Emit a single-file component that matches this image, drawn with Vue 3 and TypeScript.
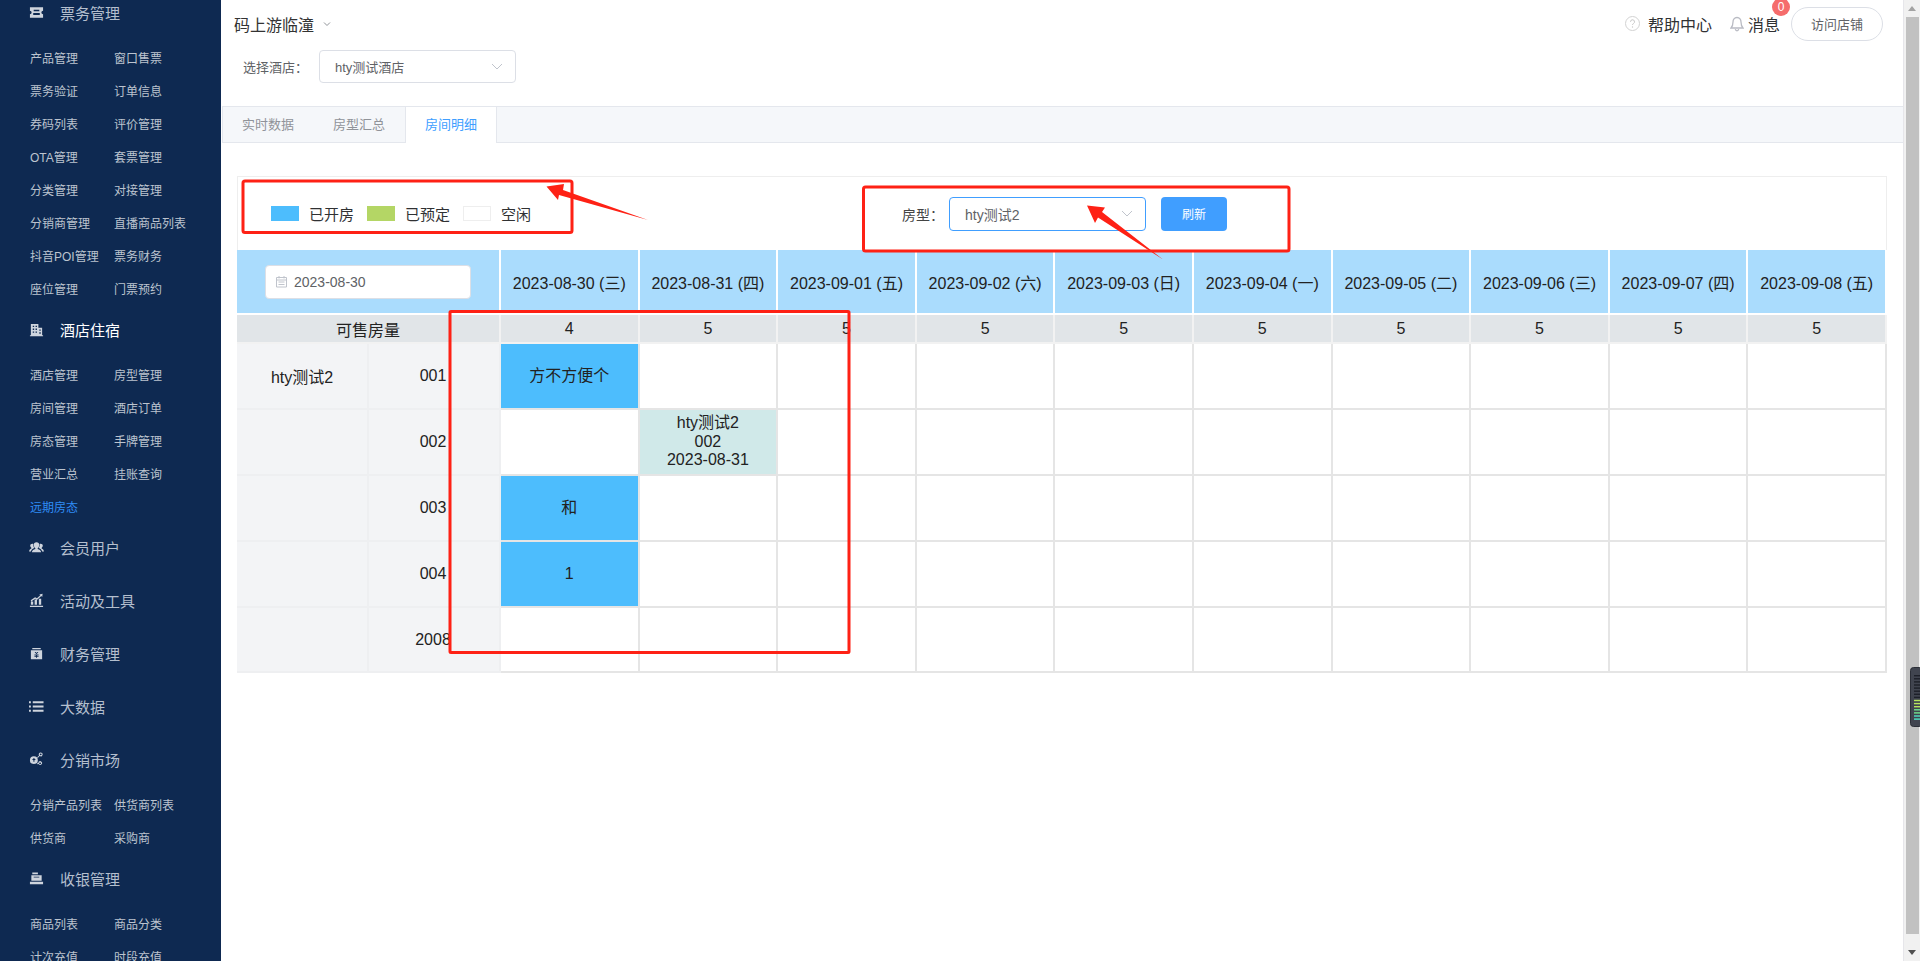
<script setup lang="ts">
interface Group { title: string; icon: string; active?: boolean; items: { label: string; current?: boolean }[] }
const mk = (...l: string[]) => l.map((label) => ({ label }))
const groups: Group[] = [
  { title: '票务管理', icon: 'ticket', items: mk('产品管理','窗口售票','票务验证','订单信息','券码列表','评价管理','OTA管理','套票管理','分类管理','对接管理','分销商管理','直播商品列表','抖音POI管理','票务财务','座位管理','门票预约') },
  { title: '酒店住宿', icon: 'hotel', active: true, items: [...mk('酒店管理','房型管理','房间管理','酒店订单','房态管理','手牌管理','营业汇总','挂账查询'), { label: '远期房态', current: true }] },
  { title: '会员用户', icon: 'users', items: [] },
  { title: '活动及工具', icon: 'chart', items: [] },
  { title: '财务管理', icon: 'wallet', items: [] },
  { title: '大数据', icon: 'list', items: [] },
  { title: '分销市场', icon: 'share', items: mk('分销产品列表','供货商列表','供货商','采购商') },
  { title: '收银管理', icon: 'cash', items: mk('商品列表','商品分类','计次充值','时段充值') },
]
const icons: Record<string, string> = {
  ticket: 'M1 2.500h14v3.700a1.800 1.800 0 0 0 0 3.600V13.500H1V9.800a1.800 1.800 0 0 0 0-3.600zM5 5v1.600h6V5zM4.500 8.600v2h7v-2z',
  hotel: 'M2 2h8v4h4v8h1v1.200H1V14h1zM4 4v1.400h1.500V4zM7 4v1.400h1.500V4zM4 7v1.400h1.500V7zM7 7v1.400h1.500V7zM4 10v1.400h1.500V10zM7 10v1.400h1.500V10zM11 8v1.400h1.500V8zM11 11v1.400h1.500V11z',
  users: 'M8 2.500a2.800 2.800 0 0 1 2.800 3c0 1.400-.7 2.600-1.500 3.100v.9c1.800.5 3.200 1.400 3.700 3.500H3c.5-2.100 1.900-3 3.700-3.500v-.9C5.900 8.100 5.200 6.900 5.200 5.500A2.800 2.800 0 0 1 8 2.500zM3.600 4c.4 0 .8.100 1.100.3-.3 1.700.2 3.200 1 4.300-1.700.6-3.200 1.600-3.700 3.600H0c.3-1.800 1.200-2.700 2.500-3.200v-.8C1.800 7.700 1.300 6.800 1.300 5.900 1.300 4.900 2.300 4 3.600 4zM12.400 4c1.300 0 2.300.9 2.300 1.900 0 .9-.5 1.800-1.200 2.300v.8c1.300.5 2.200 1.400 2.500 3.200h-2c-.5-2-2-3-3.700-3.600.8-1.100 1.300-2.600 1-4.300.3-.2.700-.3 1.100-.3z',
  chart: 'M1 13.500h14V15H1zM2 9h2.500v3.500H2zM6 7h2.500v5.500H6zM10.500 6H13v6.500h-2.500zM1.800 7.800 6.500 4.600l2 1 3.500-3.200-1-.9L14.500.8l-.4 3.400-1-.9-4.400 4-2-1.100-4.300 2.800z',
  wallet: 'M3.500 2h9v1.400h-9zM2 4.500h12V14H2zM6 6.500l2 2.200 2-2.200h-1.200L8 7.500l-.8-1zM5.800 9v.9h1.700v.6H5.800v.9h1.700v1.200h1v-1.200h1.700v-.9H8.500v-.6h1.700V9z',
  list: 'M0 2.500h2V4.500H0zM4 2.500h11.500V4.500H4zM0 7h2v2H0zM4 7h11.500v2H4zM0 11.500h2v2H0zM4 11.500h11.500v2H4z',
  share: 'M5.200 4.500a4.200 4.200 0 1 1 0 8.400 4.200 4.200 0 0 1 0-8.400zM4.700 6.500v1h-1v1h1v2h1.100v-2h1v-1h-1v-1zM12.500.5a2 2 0 1 1-1.100 3.700L9.300 6.300l-.6-.7 2-2A2 2 0 0 1 12.500.5zm0 1a1 1 0 1 0 0 2 1 1 0 0 0 0-2zM10.300 10.500a2 2 0 1 1-.1 2.300l-1.500.2v-1.100l1.200-.2.400-1.200zm1.500.6a1 1 0 1 0 0 2 1 1 0 0 0 0-2z',
  cash: 'M3.500 1.500h6V3.500h-6zM2.500 4.500h11v6h-11zM5 6v1h6V6zM1 11.500h14V14H1z',
}

const dates = ['2023-08-30 (三)','2023-08-31 (四)','2023-09-01 (五)','2023-09-02 (六)','2023-09-03 (日)','2023-09-04 (一)','2023-09-05 (二)','2023-09-06 (三)','2023-09-07 (四)','2023-09-08 (五)']
const counts = [4,5,5,5,5,5,5,5,5,5]
interface Booking { lines: string[]; kind: 'open' | 'held' }
interface Room { type: string; no: string; cells: Record<number, Booking> }
const rooms: Room[] = [
  { type: 'hty测试2', no: '001', cells: { 0: { lines: ['方不方便个'], kind: 'open' } } },
  { type: '', no: '002', cells: { 1: { lines: ['hty测试2','002','2023-08-31'], kind: 'held' } } },
  { type: '', no: '003', cells: { 0: { lines: ['和'], kind: 'open' } } },
  { type: '', no: '004', cells: { 0: { lines: ['1'], kind: 'open' } } },
  { type: '', no: '2008', cells: {} },
]
const meterBars = Array.from({ length: 15 }, (_, i) => ({
  y: 8 + i * 3.1,
  color: i < 8 ? '#1d2029' : i < 11 ? '#b6e65c' : i < 13 ? '#6fe58d' : '#4fe3c4',
}))
</script>

<template>
  <div class="page">
    <aside class="side">
      <div class="side-inner">
        <section v-for="g in groups" :key="g.title" class="group">
          <div class="group-head" :class="{ on: g.active }">
            <svg class="group-icon" viewBox="0 0 16 16" width="15" height="15"><path :d="icons[g.icon]" fill="currentColor" fill-rule="evenodd" /></svg>
            <span>{{ g.title }}</span>
          </div>
          <div v-if="g.items.length" class="sub">
            <span v-for="it in g.items" :key="it.label" class="sub-item" :class="{ cur: it.current }">{{ it.label }}</span>
          </div>
        </section>
      </div>
    </aside>

    <main class="main">
      <header class="top">
        <div class="top-row">
          <div class="brand">
            <span>码上游临潼</span>
            <svg width="8" height="6" viewBox="0 0 8 6"><path d="M1 1.500 4 4.500 7 1.500" fill="none" stroke="#909399" stroke-width="1" /></svg>
          </div>
          <div class="tools">
            <svg width="15" height="15" viewBox="0 0 15 15"><circle cx="7.500" cy="7.500" r="7" fill="none" stroke="#d2d2d2" /><path d="M5.500 5.800a2 2 0 1 1 3 1.700c-.7.400-1 .8-1 1.500" fill="none" stroke="#c8c8c8" /><circle cx="7.500" cy="11" r=".7" fill="#c8c8c8" /></svg>
            <span class="help">帮助中心</span>
            <svg class="bell" width="14" height="16" viewBox="0 0 14 16"><path d="M7 1.500c-2.700 0-4 2-4 4.500 0 3-.7 4.500-2 6h12c-1.300-1.500-2-3-2-6 0-2.500-1.300-4.500-4-4.500zM5.300 13.200c.2 1 .8 1.600 1.700 1.600s1.500-.6 1.700-1.600" fill="none" stroke="#b9bbc3" stroke-width="1.300" /></svg>
            <span class="msg">消息<em class="badge">0</em></span>
            <button class="visit">访问店铺</button>
          </div>
        </div>
        <div class="hotel-row">
          <label>选择酒店：</label>
          <div class="select">
            <span>hty测试酒店</span>
            <svg width="12" height="7" viewBox="0 0 12 7"><path d="M1 1l5 5 5-5" fill="none" stroke="#c0c4cc" /></svg>
          </div>
        </div>
      </header>

      <nav class="tabs">
        <span class="tab">实时数据</span>
        <span class="tab">房型汇总</span>
        <span class="tab active">房间明细</span>
      </nav>

      <div class="body">
        <div class="toolbar">
          <div class="legend">
            <i class="swatch open"></i><span class="lbl">已开房</span>
            <i class="swatch green"></i><span class="lbl">已预定</span>
            <i class="swatch free"></i><span class="lbl">空闲</span>
          </div>
          <div class="filter">
            <span class="filter-label">房型：</span>
            <div class="select focus">
              <span>hty测试2</span>
              <svg width="12" height="7" viewBox="0 0 12 7"><path d="M1 1l5 5 5-5" fill="none" stroke="#c0c4cc" /></svg>
            </div>
            <button class="refresh">刷新</button>
          </div>
        </div>

        <div class="grid">
          <div class="cell head span2">
            <div class="date-input">
              <svg width="13" height="13" viewBox="0 0 13 13"><path d="M1.500 2.500h10v9.500h-10zM1.500 5h10M4 1v2.500M9 1v2.500M3.500 7h6M3.500 9.500h6" fill="none" stroke="#c0c4cc" /></svg>
              <span>2023-08-30</span>
            </div>
          </div>
          <div v-for="d in dates" :key="d" class="cell head">{{ d }}</div>

          <div class="cell sale span2">可售房量</div>
          <div v-for="(c, i) in counts" :key="i" class="cell sale">{{ c }}</div>

          <template v-for="r in rooms" :key="r.no">
            <div class="cell side-cell">{{ r.type }}</div>
            <div class="cell side-cell no">{{ r.no }}</div>
            <div v-for="(d, i) in dates" :key="d" class="cell day" :class="r.cells[i]?.kind">
              <div v-if="r.cells[i]" class="lines">
                <div v-for="ln in r.cells[i].lines" :key="ln">{{ ln }}</div>
              </div>
            </div>
          </template>
        </div>
      </div>
    </main>

    <div class="scrollbar">
      <svg width="16" height="17" viewBox="0 0 16 17"><path d="M4 11l4-5 4 5z" fill="#a3a3a3" /></svg>
      <div class="thumb"></div>
      <svg width="16" height="17" viewBox="0 0 16 17"><path d="M4 6l4 5 4-5z" fill="#505050" /></svg>
    </div>

    <svg class="meter" width="10" height="60" viewBox="0 0 10 60">
      <rect x=".5" y=".5" width="12" height="59" rx="3" fill="#40444f" stroke="#2b2e37" />
      <rect v-for="(b, i) in meterBars" :key="i" x="4" :y="b.y" width="6" height="1.400" :fill="b.color" />
    </svg>

    <svg class="marks" width="1920" height="961" viewBox="0 0 1920 961">
      <g fill="none" stroke="#fe2115" stroke-width="3" stroke-linejoin="round">
        <rect x="243" y="181" width="329" height="51.500" rx="2" />
        <rect x="863.500" y="187" width="425.500" height="64" rx="2" />
        <rect x="450" y="311.500" width="399" height="341" rx="1" />
      </g>
      <g fill="#fe2115">
        <polygon points="546.500,186.500 564,184 563,190 648,220 559,195 558,200" />
        <polygon points="1087,205.500 1105,207.500 1102,212 1163,259.500 1098,217.500 1095,223" />
      </g>
    </svg>
  </div>
</template>

<style>
html, body { margin: 0; height: 100%; overflow: hidden; background: #fff; }
</style>

<style scoped>
.page {
  position: relative;
  display: flex;
  width: 1920px;
  height: 961px;
  overflow: hidden;
  font-family: "Liberation Sans", "Noto Sans CJK SC", sans-serif;
  color: #222;
}
.side {
  flex: 0 0 221px;
  background: #0e2951;
  overflow: hidden;
}
.side-inner { margin-top: -14px; }
.group-head {
  display: flex;
  align-items: center;
  height: 53px;
  padding-left: 29px;
  font-size: 15px;
  color: #b4bfce;
}
.group-head.on { color: #fff; }
.group-icon { margin-right: 16px; color: #ced4dd; }
.sub {
  display: grid;
  grid-template-columns: 84px 1fr;
  grid-auto-rows: 33px;
  align-items: center;
  margin: 2px 0 -2px;
  padding-left: 30px;
}
.sub-item { font-size: 12px; color: #bcc4cf; white-space: nowrap; }
.sub-item.cur { color: #2f8cf5; }

.main {
  flex: 1;
  min-width: 0;
  margin-left: 1px;
  display: flex;
  flex-direction: column;
}
.top { height: 106px; }
.top-row {
  display: flex;
  align-items: center;
  justify-content: space-between;
  height: 47px;
  padding: 0 20px 0 12px;
}
.brand { display: flex; align-items: center; gap: 9px; font-size: 16px; color: #333; }
.tools { display: flex; align-items: center; font-size: 16px; color: #303133; }
.help { margin-left: 8px; }
.bell { margin-left: 18px; }
.msg { position: relative; margin-left: 4px; }
.badge {
  position: absolute;
  top: -14px;
  right: -10px;
  width: 18px;
  height: 18px;
  border-radius: 50%;
  background: #f56c6c;
  color: #fff;
  font-size: 12px;
  font-style: normal;
  line-height: 18px;
  text-align: center;
}
.visit {
  width: 92px;
  height: 34px;
  margin-left: 11px;
  border: 1px solid #dcdfe6;
  border-radius: 17px;
  background: #fff;
  color: #606266;
  font: 13px "Liberation Sans", "Noto Sans CJK SC", sans-serif;
}
.hotel-row { display: flex; align-items: center; margin-top: 3px; padding-left: 21px; }
.hotel-row label { width: 76px; font-size: 13px; color: #606266; }
.select {
  box-sizing: border-box;
  display: flex;
  align-items: center;
  justify-content: space-between;
  width: 197px;
  height: 33px;
  padding: 0 12px 0 15px;
  border: 1px solid #dcdfe6;
  border-radius: 4px;
  background: #fff;
  font-size: 13px;
  color: #606266;
}
.select.focus { height: 34px; border-color: #409eff; font-size: 14px; }

.tabs {
  box-sizing: border-box;
  display: flex;
  height: 37px;
  border: 1px solid #e4e7ed;
  border-right: 0;
  background: #f5f7fa;
}
.tab {
  box-sizing: border-box;
  width: 91px;
  padding-left: 19px;
  font-size: 13px;
  line-height: 35px;
  color: #909399;
}
.tab.active {
  width: 92px;
  height: 36px;
  padding-left: 19px;
  background: #fff;
  color: #409eff;
  border-left: 1px solid #e4e7ed;
  border-right: 1px solid #e4e7ed;
}
.body { padding: 33px 16px 0 15px; }
.toolbar {
  box-sizing: border-box;
  display: flex;
  align-items: center;
  height: 74px;
  border: 1px solid #eee;
  border-bottom: 0;
}
.legend { display: flex; align-items: center; width: 664px; padding-left: 33px; box-sizing: border-box; font-size: 15px; color: #303133; }
.swatch { display: block; box-sizing: border-box; width: 28px; height: 15px; }
.swatch.open { background: #4dbdfd; }
.swatch.green { background: #b4d665; }
.swatch.free { border: 1px solid #eee; background: #fff; }
.lbl { margin: 0 13px 0 10px; }
.filter { display: flex; align-items: center; font-size: 14px; color: #444; }
.filter-label { width: 47px; }
.refresh {
  width: 66px;
  height: 34px;
  margin-left: 15px;
  border: 0;
  border-radius: 4px;
  background: #409eff;
  color: #fff;
  font: 12px "Liberation Sans", "Noto Sans CJK SC", sans-serif;
}

.grid {
  display: grid;
  grid-template-columns: 132px 132px repeat(10, 1fr);
  grid-template-rows: 65px 29px 66px 66px 66px 66px 65px;
  font-size: 16px;
  color: #222;
}
.cell {
  box-sizing: border-box;
  display: flex;
  align-items: center;
  justify-content: center;
  border-right: 2px solid #e5e5e5;
  border-bottom: 2px solid #e5e5e5;
  text-align: center;
}
.span2 { grid-column: span 2; }
.head { background: #aadcfd; border-color: #fff; }
.sale { background: #e1e5e8; border-color: #f2f2f2; }
.side-cell { background: #f3f4f6; border-color: #eeeff1; }
.side-cell.no { padding-right: 2px; }
.day { background: #fff; }
.day.open { background: #4dbdfd; }
.day.held { background: #d0e9e9; }
.lines { line-height: 18.500px; }
.date-input {
  box-sizing: border-box;
  display: flex;
  align-items: center;
  gap: 6px;
  width: 206px;
  height: 34px;
  padding-left: 9px;
  border: 1px solid #dcdfe6;
  border-radius: 4px;
  background: #fff;
  font-size: 14px;
  color: #606266;
}
.scrollbar {
  box-sizing: border-box;
  flex: 0 0 17px;
  display: flex;
  flex-direction: column;
  align-items: center;
  border-left: 1px solid #e6e6ea;
  background: #f1f1f1;
}
.thumb { flex: 1; width: 13px; margin-bottom: 10px; background: #c1c1c1; }
.meter { position: absolute; left: 1910px; top: 667px; }
.marks { position: absolute; left: 0; top: 0; pointer-events: none; }
</style>
